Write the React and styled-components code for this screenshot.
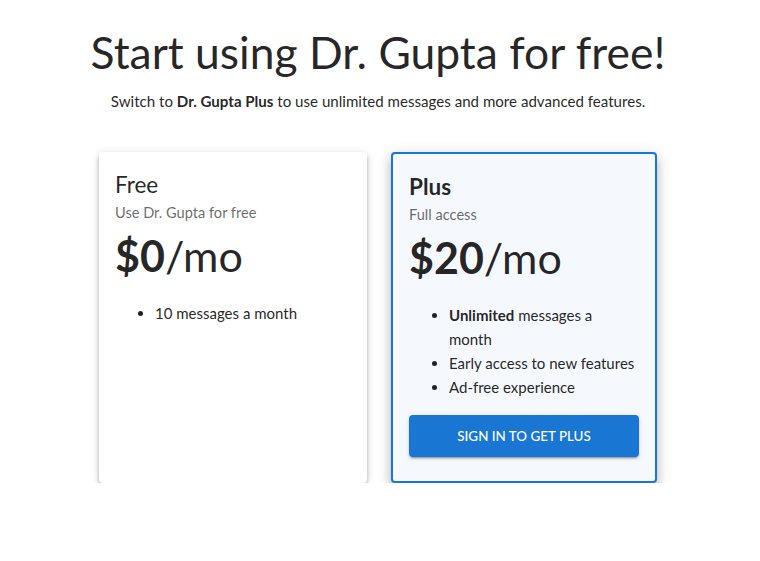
import React from 'react'
import styled, { createGlobalStyle } from 'styled-components'

const GlobalStyle = createGlobalStyle`
    body {
        margin: 0;
        background: #fff;
        font-family: Lato, "Noto Sans", sans-serif;
        color: rgba(0, 0, 0, 0.87);
    }
`;

const plans = [
    {
        name: 'Free',
        tagline: 'Use Dr. Gupta for free',
        price: '$0',
        features: [<>10 messages a month</>],
    },
    {
        name: 'Plus',
        tagline: 'Full access',
        price: '$20',
        highlighted: true,
        features: [
            <><b>Unlimited</b> messages a month</>,
            <>Early access to new features</>,
            <>Ad-free experience</>,
        ],
    },
]

function App() {
    return (
        <Page>
            <GlobalStyle />
            <Title>Start using Dr. Gupta for free!</Title>
            <Subtitle>
                Switch to <b>Dr. Gupta Plus</b> to use unlimited messages and more advanced features.
            </Subtitle>
            <Cards>
                {plans.map((plan) => (
                    <Card key={plan.name} $highlighted={plan.highlighted}>
                        <PlanName $highlighted={plan.highlighted}>{plan.name}</PlanName>
                        <Tagline>{plan.tagline}</Tagline>
                        <Price><b>{plan.price}</b>/mo</Price>
                        <Features>
                            {plan.features.map((f, i) => <li key={i}>{f}</li>)}
                        </Features>
                        {plan.highlighted && <Button>Sign in to get Plus</Button>}
                    </Card>
                ))}
            </Cards>
        </Page>
    )
}

const Page = styled.div`
    display: flex;
    flex-direction: column;
    align-items: center;
    padding: 24px 4px 0 0;
`;

const Title = styled.h1`
    margin: 0;
    font-size: 44.4px;
    font-weight: 400;
    line-height: 56px;
`;

const Subtitle = styled.p`
    margin: 10px 0 0;
    font-size: 15.1px;
    line-height: 1.5;
    b { font-weight: 700; }
`;

const Cards = styled.div`
    display: flex;
    gap: 24px;
    margin-top: 39px;
`;

const Card = styled.div`
    box-sizing: border-box;
    width: ${(p) => (p.$highlighted ? '266px' : '268px')};
    min-height: 331px;
    padding: 17px 16px 24px;
    border-radius: 4px;
    background: ${(p) => (p.$highlighted ? '#f5f9fe' : '#fff')};
    border: ${(p) => (p.$highlighted ? '2px solid #1976d2' : 'none')};
    box-shadow: ${(p) => (p.$highlighted
        ? '0px 5px 5px -3px rgba(0,0,0,0.2), 0px 8px 10px 1px rgba(0,0,0,0.14), 0px 3px 14px 2px rgba(0,0,0,0.12)'
        : '0px 2px 4px -1px rgba(0,0,0,0.2), 0px 4px 5px 0px rgba(0,0,0,0.14), 0px 1px 10px 0px rgba(0,0,0,0.12)')};
`;

const PlanName = styled.h2`
    margin: 0;
    font-size: 22.5px;
    line-height: 32px;
    font-weight: ${(p) => (p.$highlighted ? 700 : 400)};
`;

const Tagline = styled.div`
    font-size: 14.6px;
    line-height: 24px;
    color: rgba(0, 0, 0, 0.6);
`;

const Price = styled.div`
    font-size: 43px;
    line-height: 56px;
    margin-top: 3px;
    b { font-weight: 700; }
`;

const Features = styled.ul`
    margin: 17px 0 0;
    padding: 0 3px 0 40px;
    font-size: 15px;
    line-height: 24px;
    b { font-weight: 700; }
`;

const Button = styled.button`
    display: block;
    width: 100%;
    height: 42px;
    margin-top: 16px;
    border: none;
    border-radius: 4px;
    background: #1976d2;
    color: #fff;
    font-family: inherit;
    font-size: 13.4px;
    font-weight: 500;
    text-transform: uppercase;
    box-shadow: 0px 3px 1px -2px rgba(0,0,0,0.2), 0px 2px 2px 0px rgba(0,0,0,0.14), 0px 1px 5px 0px rgba(0,0,0,0.12);
    cursor: pointer;
`;

export default App
